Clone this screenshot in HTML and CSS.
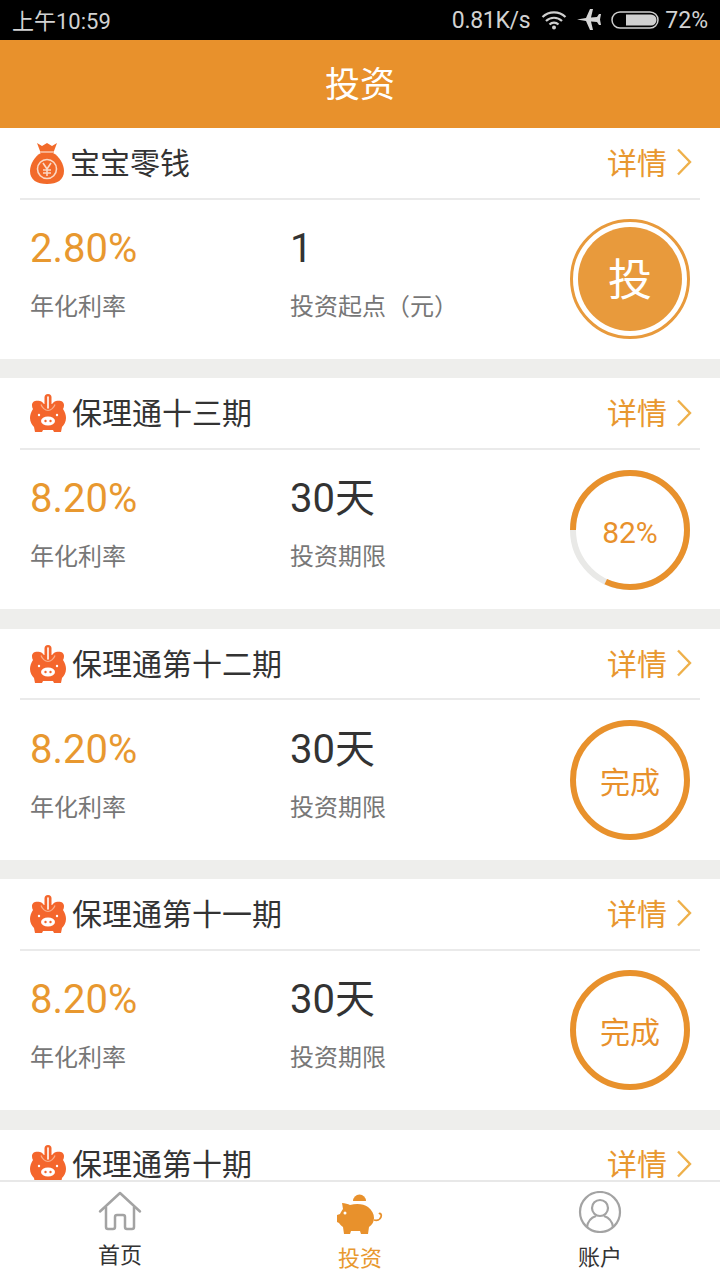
FILE: index.html
```html
<!DOCTYPE html>
<html lang="zh-CN">
<head>
  <meta charset="UTF-8" />
  <meta name="viewport" content="width=device-width, initial-scale=1.0"/>
  <title>投资</title>
  <link rel="stylesheet" href="styles.css">
</head>
<body>
  <svg class="defs" width="0" height="0">
    <symbol id="bag" viewBox="0 0 34 42">
      <path d="M7 1l5 3 5-3 5 3 5-3-3 8H10z" fill="#f26a2a"/>
      <rect x="10" y="9" width="14" height="2" fill="#f9b08c"/>
      <path d="M11 11h12c6 3 11 11 11 18 0 9-7 13-17 13S0 38 0 29c0-7 5-15 11-18z" fill="#f26a2a"/>
      <circle cx="17" cy="27" r="9.500" fill="none" stroke="#fbd9c6" stroke-width="1.600"/>
      <path d="M13 21l4 6 4-6M17 27v7M13 28h8M13 31h8" fill="none" stroke="#fbd9c6" stroke-width="1.600"/>
    </symbol>
    <symbol id="pig" viewBox="0 0 36 38">
      <path d="M2 11c0-4 4-5 8-4 2 .5 3 2 4 3h8c1-1 2-2.500 4-3 4-1 8 0 8 4 0 2-.5 3-1 4 2 3 3 6 3 9 0 4-2 7-4 9l-1 5h-7l-1-2H13l-1 2H5l-1-5c-2-2-4-5-4-9 0-3 1-6 3-9-.5-1-1-2-1-4z" fill="#f4662c"/>
      <rect x="14.500" y="0" width="7" height="17" rx="3.500" fill="#f4662c"/>
      <path d="M18 3v11" stroke="#fff" stroke-width="1.600" stroke-linecap="round"/>
      <path d="M11 10.500c1 3 4 6 7 6s6-3 7-6" fill="none" stroke="#f9b08c" stroke-width="1.200"/>
      <ellipse cx="18" cy="27" rx="7" ry="4.500" fill="#fff"/>
      <circle cx="15.500" cy="27" r="1.200" fill="#f4662c"/>
      <circle cx="20.500" cy="27" r="1.200" fill="#f4662c"/>
      <circle cx="9" cy="21" r="1.200" fill="#fff"/>
      <circle cx="27" cy="21" r="1.200" fill="#fff"/>
    </symbol>
    <symbol id="chevron" viewBox="0 0 16 28">
      <path d="M2 1.500L14 14 2 26.500" fill="none" stroke="#eeb04a" stroke-width="2.400"/>
    </symbol>
  </svg>

  <div class="app">
    <div class="statusbar">
      <span class="status-time">上午10:59</span>
      <div class="status-right">
        <span class="status-speed">0.81K/s</span>
        <svg class="status-wifi" width="26" height="20" viewBox="0 0 26 20">
          <path d="M1.500 7a16.500 16.500 0 0 1 23 0M5 11a11.500 11.500 0 0 1 16 0M8.500 14.500a6.500 6.500 0 0 1 9 0" fill="none" stroke="#cfcfcf" stroke-width="2.200"/>
          <circle cx="13" cy="17.500" r="2" fill="#cfcfcf"/>
        </svg>
        <svg class="status-plane" width="24" height="22" viewBox="0 0 24 22">
          <path d="M0 10.500l9-1.500 4-9h3l-2 8.500 6-.5 2-3h2l-1 5.500 1 5.500h-2l-2-3-6-.5 2 8.500h-3l-4-9-9-1.500z" fill="#d6d6d6"/>
        </svg>
        <svg class="status-battery" width="48" height="18" viewBox="0 0 48 18">
          <rect x="1" y="1" width="46" height="16" rx="8" fill="none" stroke="#cfcfcf" stroke-width="1.500"/>
          <path d="M15 3.500h25a5.500 5.500 0 0 1 0 11H15z" fill="#cfcfcf"/>
        </svg>
        <span class="status-level">72%</span>
      </div>
    </div>

    <header class="topbar">投资</header>

    <main class="list">
      <section class="card">
        <div class="card-head">
          <svg class="icon-bag"><use href="#bag"/></svg>
          <span class="card-title">宝宝零钱</span>
          <a class="card-more">详情<svg class="chevron"><use href="#chevron"/></svg></a>
        </div>
        <div class="card-body">
          <div class="stat">
            <div class="stat-num rate">2.80%</div>
            <div class="stat-label">年化利率</div>
          </div>
          <div class="stat">
            <div class="stat-num">1</div>
            <div class="stat-label">投资起点（元）</div>
          </div>
          <div class="btn-invest"><span>投</span></div>
        </div>
      </section>

      <section class="card">
        <div class="card-head">
          <svg class="icon-pig"><use href="#pig"/></svg>
          <span class="card-title">保理通十三期</span>
          <a class="card-more">详情<svg class="chevron"><use href="#chevron"/></svg></a>
        </div>
        <div class="card-body">
          <div class="stat">
            <div class="stat-num rate">8.20%</div>
            <div class="stat-label">年化利率</div>
          </div>
          <div class="stat">
            <div class="stat-num">30天</div>
            <div class="stat-label">投资期限</div>
          </div>
          <div class="ring">
            <svg width="120" height="120" viewBox="0 0 120 120">
              <circle class="ring-track" cx="60" cy="60" r="57"/>
              <circle class="ring-bar" cx="60" cy="60" r="57" pathLength="100" stroke-dasharray="82 18" transform="rotate(180 60 60)"/>
            </svg>
            <span class="ring-text percent">82%</span>
          </div>
        </div>
      </section>

      <section class="card">
        <div class="card-head">
          <svg class="icon-pig"><use href="#pig"/></svg>
          <span class="card-title">保理通第十二期</span>
          <a class="card-more">详情<svg class="chevron"><use href="#chevron"/></svg></a>
        </div>
        <div class="card-body">
          <div class="stat">
            <div class="stat-num rate">8.20%</div>
            <div class="stat-label">年化利率</div>
          </div>
          <div class="stat">
            <div class="stat-num">30天</div>
            <div class="stat-label">投资期限</div>
          </div>
          <div class="ring">
            <svg width="120" height="120" viewBox="0 0 120 120">
              <circle class="ring-bar" cx="60" cy="60" r="57"/>
            </svg>
            <span class="ring-text">完成</span>
          </div>
        </div>
      </section>

      <section class="card">
        <div class="card-head">
          <svg class="icon-pig"><use href="#pig"/></svg>
          <span class="card-title">保理通第十一期</span>
          <a class="card-more">详情<svg class="chevron"><use href="#chevron"/></svg></a>
        </div>
        <div class="card-body">
          <div class="stat">
            <div class="stat-num rate">8.20%</div>
            <div class="stat-label">年化利率</div>
          </div>
          <div class="stat">
            <div class="stat-num">30天</div>
            <div class="stat-label">投资期限</div>
          </div>
          <div class="ring">
            <svg width="120" height="120" viewBox="0 0 120 120">
              <circle class="ring-bar" cx="60" cy="60" r="57"/>
            </svg>
            <span class="ring-text">完成</span>
          </div>
        </div>
      </section>

      <section class="card">
        <div class="card-head">
          <svg class="icon-pig"><use href="#pig"/></svg>
          <span class="card-title">保理通第十期</span>
          <a class="card-more">详情<svg class="chevron"><use href="#chevron"/></svg></a>
        </div>
      </section>
    </main>

    <nav class="tabbar">
      <a class="tab">
        <svg class="tab-icon" width="44" height="40" viewBox="0 0 44 40">
          <path d="M2 20.500L22 2l20 18.500" fill="none" stroke="#a3a3a3" stroke-width="2.500" stroke-linecap="round" stroke-linejoin="round"/>
          <path d="M8 16v20a2 2 0 0 0 2 2h5a2 2 0 0 0 2-2V26a2 2 0 0 1 2-2h6a2 2 0 0 1 2 2v10a2 2 0 0 0 2 2h5a2 2 0 0 0 2-2V16" fill="none" stroke="#a3a3a3" stroke-width="2.500"/>
        </svg>
        <span>首页</span>
      </a>
      <a class="tab tab-active">
        <svg class="tab-icon" width="46" height="44" viewBox="0 0 46 44">
          <path d="M16 10a6.500 6.500 0 1 1 13 0z" fill="#e8912c"/>
          <path d="M5 12c3 0 6 1 8 2 7-2 14-1 18 2 4 3 6 7 6 11 0 4-2 7-5 9l-1 7h-7l-1-3H14l-1 3H7l-1-7c-2-1-3-3-4-4l-2-1v-7l3-1c1-2 2-4 3-5z" fill="#e8912c"/>
          <circle cx="8" cy="22" r="1.500" fill="#fff"/>
          <path d="M37 29c3 1 6 0 7-3s-1-4-2-3" fill="none" stroke="#e8912c" stroke-width="1.800"/>
        </svg>
        <span>投资</span>
      </a>
      <a class="tab">
        <svg class="tab-icon" width="44" height="42" viewBox="0 0 44 42">
          <circle cx="22" cy="21" r="20" fill="none" stroke="#a3a3a3" stroke-width="2.200"/>
          <circle cx="22" cy="17" r="8" fill="none" stroke="#a3a3a3" stroke-width="2.200"/>
          <path d="M9 36c1-7 6-10 9-11M35 36c-1-7-6-10-9-11" fill="none" stroke="#a3a3a3" stroke-width="2.200"/>
        </svg>
        <span>账户</span>
      </a>
    </nav>
  </div>
</body>
</html>
```

FILE: styles.css
```css
* {
  box-sizing: border-box;
}

html, body {
  height: 100%;
  margin: 0;
  font-family: Roboto, "Noto Sans CJK SC", sans-serif;
  background: #fff;
  overflow: hidden;
}

.defs {
  position: absolute;
}

.app {
  height: 1280px;
  display: flex;
  flex-direction: column;
}

.statusbar {
  height: 40px;
  flex: none;
  background: #000;
  color: #d2d2d2;
  font-size: 23px;
  padding: 0 12px;
  display: flex;
  align-items: center;
  justify-content: space-between;
}

.status-time {
  font-size: 22px;
  padding-bottom: 3px;
}

.status-speed {
  letter-spacing: -0.3px;
}

.status-right {
  display: flex;
  align-items: center;
}

.status-wifi {
  margin-left: 11px;
}

.status-plane {
  margin-left: 10px;
}

.status-battery {
  margin-left: 10px;
  margin-right: 6px;
}

.topbar {
  height: 88px;
  flex: none;
  background: #e8912c;
  color: #fff;
  font-size: 35px;
  padding-bottom: 5px;
  display: flex;
  align-items: center;
  justify-content: center;
}

.list {
  flex: 1;
  overflow: hidden;
  background: #eeeeec;
}

.card {
  height: 231px;
  margin-bottom: 19.4px;
  background: #fff;
}

.card-head {
  height: 71.5px;
  margin: 0 20px;
  padding: 0 8px 0 10px;
  border-bottom: 2px solid #eaeaea;
  display: flex;
  align-items: center;
}

.icon-bag {
  width: 34px;
  height: 42px;
  margin-right: 6px;
}

.icon-pig {
  width: 36px;
  height: 38px;
  margin-right: 6px;
}

.card-title {
  flex: 1;
  font-size: 30px;
  color: #333;
  padding-bottom: 4px;
}

.card-more {
  font-size: 30px;
  color: #e8982f;
  padding-bottom: 4px;
  display: flex;
  align-items: center;
}

.chevron {
  width: 16px;
  height: 28px;
  margin-left: 9px;
  margin-top: 3px;
}

.card-body {
  height: 159.5px;
  padding: 0 30px;
  display: grid;
  grid-template-columns: 260px 1fr 120px;
  align-items: center;
}

.stat {
  padding-bottom: 10px;
}

.stat-num {
  font-size: 40px;
  line-height: 48px;
  color: #333;
}

.stat-num.rate {
  color: #e8982f;
}

.stat-label {
  font-size: 24px;
  line-height: 34px;
  margin-top: 17px;
  color: #777;
}

.btn-invest {
  width: 120px;
  height: 120px;
  border: 3px solid #e89a3c;
  border-radius: 50%;
  background: #fff;
  padding: 5px;
}

.btn-invest span {
  height: 100%;
  border-radius: 50%;
  background: #e89a3c;
  color: #fff;
  font-size: 44px;
  padding-bottom: 5px;
  display: flex;
  align-items: center;
  justify-content: center;
}

.ring {
  width: 120px;
  height: 120px;
  position: relative;
}

.ring svg {
  display: block;
}

.ring circle {
  fill: none;
  stroke-width: 6;
}

.ring .ring-track {
  stroke: #e9e9e7;
}

.ring .ring-bar {
  stroke: #e8912c;
}

.ring-text {
  position: absolute;
  inset: 0;
  color: #e8912c;
  font-size: 30px;
  display: flex;
  align-items: center;
  justify-content: center;
}

.ring-text.percent {
  padding-top: 5px;
}

.tabbar {
  height: 100px;
  flex: none;
  background: #fff;
  border-top: 2px solid #e8e8e8;
  display: grid;
  grid-template-columns: repeat(3, 240px);
}

.tab {
  font-size: 22px;
  color: #333;
  display: flex;
  flex-direction: column;
  align-items: center;
  padding-top: 9px;
}

.tab span {
  line-height: 30px;
  margin-top: 10px;
}

.tab-active {
  color: #e8982f;
}

.tab-active span {
  margin-top: 9px;
}
```
